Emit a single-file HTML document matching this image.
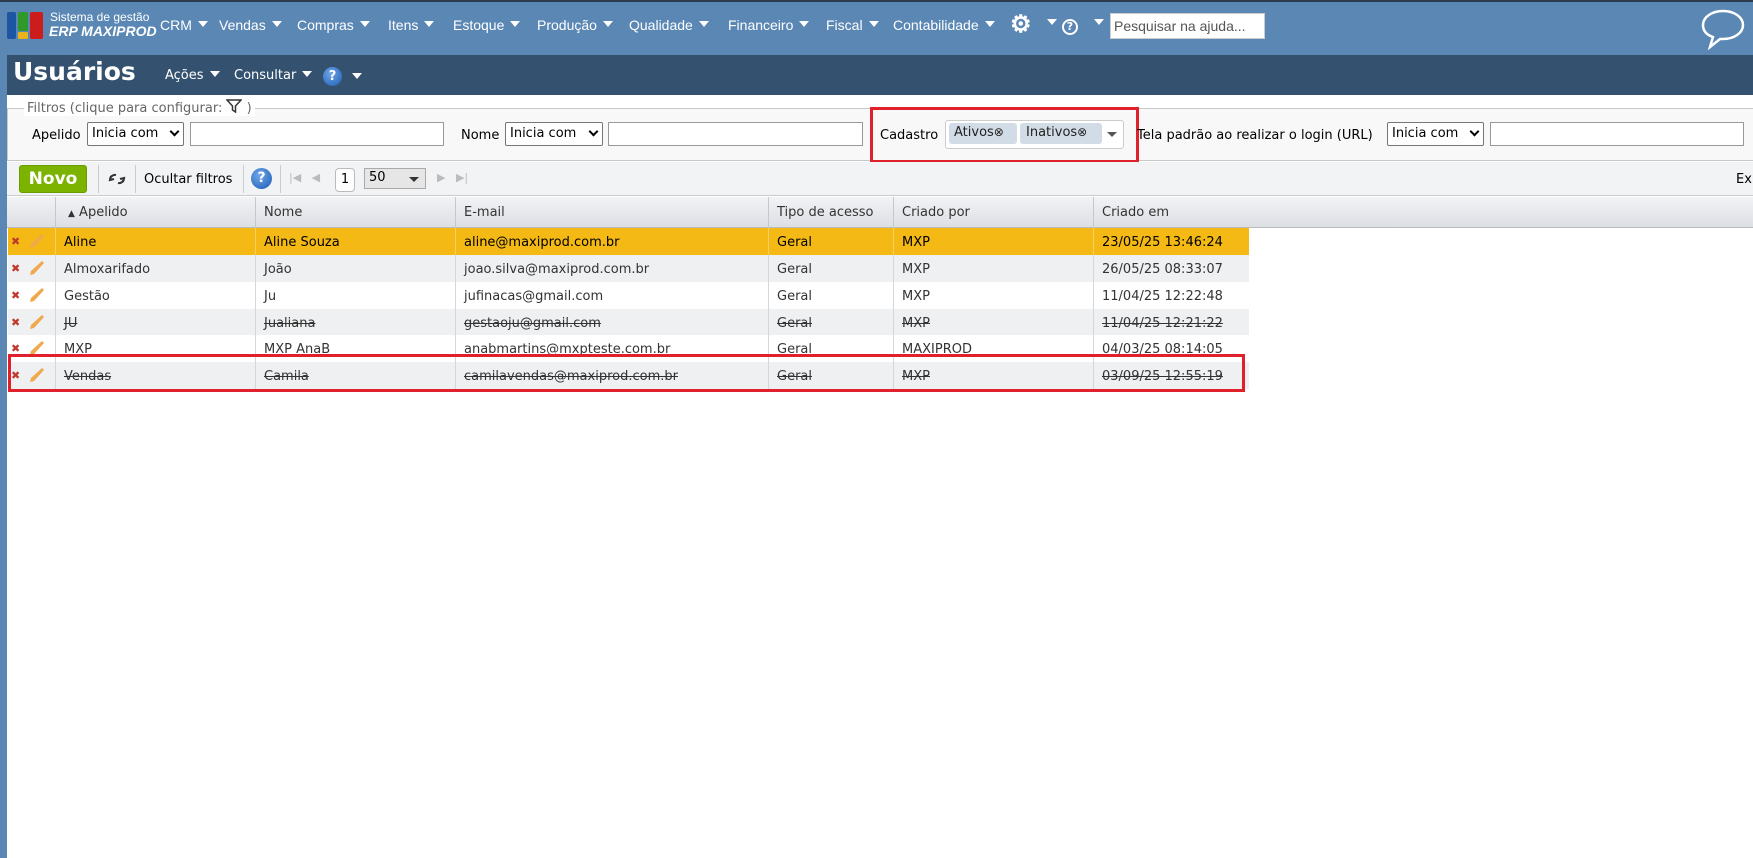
<!DOCTYPE html>
<html><head><meta charset="utf-8">
<style>
*{box-sizing:border-box;margin:0;padding:0}
body{width:1753px;height:858px;overflow:hidden;background:#5a87b4;font-family:"DejaVu Sans",Verdana,sans-serif;font-size:13px;color:#333;position:relative}
.abs{position:absolute}
.nav{font-family:"Liberation Sans",Arial,sans-serif;font-size:14px;color:#fff;top:17px;white-space:nowrap}
.tri{display:inline-block;width:0;height:0;border-left:5px solid transparent;border-right:5px solid transparent;border-top:6px solid #fff;vertical-align:middle;margin-left:6px;position:relative;top:-2px}
.main{left:7px;top:55px;width:1746px;height:803px;background:#fff}
.sel{border:1px solid #767676;border-radius:2px;background:#fff;height:24px;font-size:13px;padding:3px 0 0 4px;color:#000}
.inp{border:1px solid #999;background:#fff;height:24px}
.chev{position:absolute;right:5px;top:5px;width:7px;height:7px;border-right:2px solid #000;border-bottom:2px solid #000;transform:rotate(45deg)}
.row{position:absolute;left:8px;width:1241px;height:27px}
.cell{position:absolute;top:7px;white-space:nowrap}
.s{text-decoration:line-through}
.vl{position:absolute;top:0;width:1px;height:100%;background:#d3d6da}
.x{position:absolute;left:3px;top:7px;color:#c0392b;font-weight:bold;font-size:11px}
.pen{position:absolute;left:20px;top:4px}
</style></head><body>
<div class="abs" style="left:0;top:0;width:1753px;height:2px;background:#2d3b4c"></div>
<div class="abs" style="left:7px;top:12px;width:9px;height:27px;background:#1c56a2;border-radius:2px"></div>
<div class="abs" style="left:18px;top:12px;width:10px;height:19px;background:#2f9a2a;border-radius:2px"></div>
<div class="abs" style="left:18px;top:32px;width:10px;height:7px;background:#eab21c;border-radius:1px"></div>
<div class="abs" style="left:30px;top:12px;width:13px;height:27px;background:#cc1c1c;border-radius:2px"></div>
<div class="abs" style="left:50px;top:10px;color:#fff;font-family:'Liberation Sans',sans-serif;font-size:12px">Sistema de gestão</div>
<div class="abs" style="left:49px;top:23px;color:#fff;font-family:'Liberation Sans',sans-serif;font-size:14px;font-weight:bold;font-style:italic">ERP MAXIPROD</div>
<div class="abs nav" style="left:160px">CRM<span class="tri"></span></div>
<div class="abs nav" style="left:219px">Vendas<span class="tri"></span></div>
<div class="abs nav" style="left:297px">Compras<span class="tri"></span></div>
<div class="abs nav" style="left:388px">Itens<span class="tri"></span></div>
<div class="abs nav" style="left:453px">Estoque<span class="tri"></span></div>
<div class="abs nav" style="left:537px">Produção<span class="tri"></span></div>
<div class="abs nav" style="left:629px">Qualidade<span class="tri"></span></div>
<div class="abs nav" style="left:728px">Financeiro<span class="tri"></span></div>
<div class="abs nav" style="left:826px">Fiscal<span class="tri"></span></div>
<div class="abs nav" style="left:893px">Contabilidade<span class="tri"></span></div>
<div class="abs nav" style="left:1010px;top:10px;font-size:24px;font-weight:bold">⚙</div>
<div class="abs nav" style="left:1041px;top:15px"><span class="tri"></span></div>
<div class="abs" style="left:1062px;top:19px;width:16px;height:16px;border:2px solid #fff;border-radius:50%;color:#fff;font-size:11px;font-weight:bold;text-align:center;line-height:12px">?</div>
<div class="abs nav" style="left:1088px;top:15px"><span class="tri"></span></div>
<div class="abs" style="left:1110px;top:13px;width:155px;height:26px;background:#fff;border:1px solid #ccc;font-family:'Liberation Sans',sans-serif;font-size:14px;color:#555;padding:4px 3px">Pesquisar na ajuda...</div>
<svg class="abs" style="left:1700px;top:8px" width="46" height="42" viewBox="0 0 46 42"><path d="M23 3C12 3 3 9 3 17c0 6 4 10 10 12l-3 10 10-8c1 0 2 0 3 0 11 0 20-6 20-14S34 3 23 3z" fill="none" stroke="#fff" stroke-width="2.5"/></svg>

<div class="abs main">
 <div class="abs" style="left:0;top:0;width:1746px;height:40px;background:#34526f"></div>
 <div class="abs" style="left:6px;top:2px;color:#fff;font-size:25px;font-weight:bold">Usuários</div>
 <div class="abs" style="left:158px;top:13px;color:#fff;font-size:13px">Ações<span class="tri"></span></div>
 <div class="abs" style="left:227px;top:13px;color:#fff;font-size:13px">Consultar<span class="tri"></span></div>
 <div class="abs" style="left:316px;top:12px;width:19px;height:19px;border-radius:50%;background:radial-gradient(circle at 40% 35%,#6fa6e8,#1d5cb5);color:#fff;font-weight:bold;font-size:13px;text-align:center;line-height:19px">?</div>
 <div class="abs" style="left:345px;top:15px"><span class="tri" style="margin:0"></span></div>
 <div class="abs" style="left:0;top:53px;width:1746px;height:53px;border-top:1px solid #c8c8c8;border-left:1px solid #c8c8c8;border-bottom:1px solid #c8c8c8;background:#f8f8f8"></div>
 <div class="abs" style="left:17px;top:44px;background:#fff;padding:0 3px;color:#666;font-size:13px">Filtros (clique para configurar: <svg width="16" height="14" viewBox="0 0 16 14" style="vertical-align:-1px"><path d="M1 1h14L9.5 7v6L6.5 11V7z" fill="none" stroke="#333" stroke-width="1.5"/></svg> )</div>
 <div class="abs" style="left:25px;top:73px;color:#000">Apelido</div>
 <div class="abs sel" style="left:80px;top:67px;width:97px">Inicia com<span class="chev"></span></div>
 <div class="abs inp" style="left:183px;top:67px;width:254px"></div>
 <div class="abs" style="left:454px;top:73px;color:#000">Nome</div>
 <div class="abs sel" style="left:498px;top:67px;width:98px">Inicia com<span class="chev"></span></div>
 <div class="abs inp" style="left:601px;top:67px;width:255px"></div>
 <div class="abs" style="left:863px;top:52px;width:269px;height:56px;border:3px solid #e0202a"></div>
 <div class="abs" style="left:873px;top:73px;color:#000">Cadastro</div>
 <div class="abs" style="left:938px;top:65px;width:179px;height:29px;border:1px solid #ccc;border-radius:3px;background:#fff"></div>
 <div class="abs" style="left:942px;top:68px;width:68px;height:21px;background:#d2dce6;border-radius:3px;padding:2px 5px;font-size:13px;color:#222">Ativos<span style="font-size:12px">⊗</span></div>
 <div class="abs" style="left:1013px;top:68px;width:82px;height:21px;background:#d2dce6;border-radius:3px;padding:2px 6px;font-size:13px;color:#222">Inativos<span style="font-size:12px">⊗</span></div>
 <div class="abs" style="left:1100px;top:77px;border-left:5px solid transparent;border-right:5px solid transparent;border-top:5px solid #555"></div>
 <div class="abs" style="left:1130px;top:73px;color:#000">Tela padrão ao realizar o login (URL)</div>
 <div class="abs sel" style="left:1380px;top:67px;width:97px">Inicia com<span class="chev"></span></div>
 <div class="abs inp" style="left:1483px;top:67px;width:254px"></div>
 <div class="abs" style="left:0;top:107px;width:1746px;height:34px;background:#f2f3f5;border-bottom:1px solid #ccc"></div>
 <div class="abs" style="left:12px;top:110px;width:68px;height:28px;background:#7bb300;border:1px solid #6a9c00;border-radius:3px;color:#fff;font-weight:bold;font-size:17px;text-align:center;line-height:26px">Novo</div>
 <div class="abs" style="left:91px;top:110px;width:1px;height:28px;background:#ccc"></div>
 <svg class="abs" style="left:101px;top:117px" width="18" height="14" viewBox="0 0 18 14"><path d="M8 3A5 5 0 0 0 2 8M3 4l-1 4 4-1M10 11a5 5 0 0 0 6-5M15 10l1-4-4 1" fill="none" stroke="#333" stroke-width="2"/></svg>
 <div class="abs" style="left:128px;top:110px;width:1px;height:28px;background:#ccc"></div>
 <div class="abs" style="left:137px;top:117px;color:#000">Ocultar filtros</div>
 <div class="abs" style="left:236px;top:110px;width:1px;height:28px;background:#ccc"></div>
 <div class="abs" style="left:244px;top:113px;width:21px;height:21px;border-radius:50%;background:radial-gradient(circle at 40% 35%,#6fa6e8,#1d5cb5);color:#fff;font-weight:bold;font-size:14px;text-align:center;line-height:21px">?</div>
 <div class="abs" style="left:273px;top:110px;width:1px;height:28px;background:#ccc"></div>
 <div class="abs" style="left:282px;top:116px;color:#bbb;font-size:11px">|◀ &nbsp; ◀</div>
 <div class="abs" style="left:328px;top:113px;width:20px;height:24px;border:1px solid #bbb;border-radius:4px;background:#fff;text-align:center;line-height:22px;color:#000">1</div>
 <div class="abs" style="left:357px;top:113px;width:62px;height:21px;border:1px solid #aaa;background:#e6e6e6;padding:1px 4px;color:#000">50</div>
 <div class="abs" style="left:402px;top:122px;border-left:5px solid transparent;border-right:5px solid transparent;border-top:5px solid #333"></div>
 <div class="abs" style="left:430px;top:116px;color:#bbb;font-size:11px">▶ &nbsp; ▶|</div>
 <div class="abs" style="left:1729px;top:117px;color:#000">Ex</div>
 <div class="abs" style="left:0;top:142px;width:1746px;height:31px;background:linear-gradient(#f2f3f5,#dcdfe4);border-bottom:1px solid #bbb"></div>
 <div class="abs" style="left:48px;top:142px;width:1px;height:31px;background:#c4c8ce"></div>
 <div class="abs" style="left:248px;top:142px;width:1px;height:31px;background:#c4c8ce"></div>
 <div class="abs" style="left:448px;top:142px;width:1px;height:31px;background:#c4c8ce"></div>
 <div class="abs" style="left:761px;top:142px;width:1px;height:31px;background:#c4c8ce"></div>
 <div class="abs" style="left:886px;top:142px;width:1px;height:31px;background:#c4c8ce"></div>
 <div class="abs" style="left:1086px;top:142px;width:1px;height:31px;background:#c4c8ce"></div>
 <div class="abs" style="left:61px;top:150px;color:#333"><span style="font-size:9px">▲</span> Apelido</div>
 <div class="abs" style="left:257px;top:150px">Nome</div>
 <div class="abs" style="left:457px;top:150px">E-mail</div>
 <div class="abs" style="left:770px;top:150px">Tipo de acesso</div>
 <div class="abs" style="left:895px;top:150px">Criado por</div>
 <div class="abs" style="left:1095px;top:150px">Criado em</div>
</div>

<div class="row" style="top:228px;background:#f4b915;color:#000">
 <div class="vl" style="left:47px;background:#fff5"></div><div class="vl" style="left:247px;background:#fff5"></div><div class="vl" style="left:447px;background:#fff5"></div><div class="vl" style="left:760px;background:#fff5"></div><div class="vl" style="left:885px;background:#fff5"></div><div class="vl" style="left:1085px;background:#fff5"></div>
 <div class="x">✖</div><svg class="pen" width="18" height="18" viewBox="0 0 18 18"><path d="M14 2l2 2L6 15l-4 1 1-4z" fill="#f0a84c"/></svg>
 <div class="cell" style="left:56px">Aline</div><div class="cell" style="left:256px">Aline Souza</div><div class="cell" style="left:456px">aline@maxiprod.com.br</div><div class="cell" style="left:769px">Geral</div><div class="cell" style="left:894px">MXP</div><div class="cell" style="left:1094px">23/05/25 13:46:24</div>
</div>
<div class="row" style="top:255px;background:#eff0f2">
 <div class="vl" style="left:47px"></div><div class="vl" style="left:247px"></div><div class="vl" style="left:447px"></div><div class="vl" style="left:760px"></div><div class="vl" style="left:885px"></div><div class="vl" style="left:1085px"></div>
 <div class="x">✖</div><svg class="pen" width="18" height="18" viewBox="0 0 18 18"><path d="M14 2l2 2L6 15l-4 1 1-4z" fill="#f0a84c"/></svg>
 <div class="cell" style="left:56px">Almoxarifado</div><div class="cell" style="left:256px">João</div><div class="cell" style="left:456px">joao.silva@maxiprod.com.br</div><div class="cell" style="left:769px">Geral</div><div class="cell" style="left:894px">MXP</div><div class="cell" style="left:1094px">26/05/25 08:33:07</div>
</div>
<div class="row" style="top:282px;background:#fff">
 <div class="vl" style="left:47px"></div><div class="vl" style="left:247px"></div><div class="vl" style="left:447px"></div><div class="vl" style="left:760px"></div><div class="vl" style="left:885px"></div><div class="vl" style="left:1085px"></div>
 <div class="x">✖</div><svg class="pen" width="18" height="18" viewBox="0 0 18 18"><path d="M14 2l2 2L6 15l-4 1 1-4z" fill="#f0a84c"/></svg>
 <div class="cell" style="left:56px">Gestão</div><div class="cell" style="left:256px">Ju</div><div class="cell" style="left:456px">jufinacas@gmail.com</div><div class="cell" style="left:769px">Geral</div><div class="cell" style="left:894px">MXP</div><div class="cell" style="left:1094px">11/04/25 12:22:48</div>
</div>
<div class="row" style="top:309px;background:#eff0f2">
 <div class="vl" style="left:47px"></div><div class="vl" style="left:247px"></div><div class="vl" style="left:447px"></div><div class="vl" style="left:760px"></div><div class="vl" style="left:885px"></div><div class="vl" style="left:1085px"></div>
 <div class="x">✖</div><svg class="pen" width="18" height="18" viewBox="0 0 18 18"><path d="M14 2l2 2L6 15l-4 1 1-4z" fill="#f0a84c"/></svg>
 <div class="cell s" style="left:56px">JU</div><div class="cell s" style="left:256px">Jualiana</div><div class="cell s" style="left:456px">gestaoju@gmail.com</div><div class="cell s" style="left:769px">Geral</div><div class="cell s" style="left:894px">MXP</div><div class="cell s" style="left:1094px">11/04/25 12:21:22</div>
</div>
<div class="row" style="top:335px;background:#fff">
 <div class="vl" style="left:47px"></div><div class="vl" style="left:247px"></div><div class="vl" style="left:447px"></div><div class="vl" style="left:760px"></div><div class="vl" style="left:885px"></div><div class="vl" style="left:1085px"></div>
 <div class="x">✖</div><svg class="pen" width="18" height="18" viewBox="0 0 18 18"><path d="M14 2l2 2L6 15l-4 1 1-4z" fill="#f0a84c"/></svg>
 <div class="cell" style="left:56px">MXP</div><div class="cell" style="left:256px">MXP AnaB</div><div class="cell" style="left:456px">anabmartins@mxpteste.com.br</div><div class="cell" style="left:769px">Geral</div><div class="cell" style="left:894px">MAXIPROD</div><div class="cell" style="left:1094px">04/03/25 08:14:05</div>
</div>
<div class="row" style="top:362px;background:#eff0f2">
 <div class="vl" style="left:47px"></div><div class="vl" style="left:247px"></div><div class="vl" style="left:447px"></div><div class="vl" style="left:760px"></div><div class="vl" style="left:885px"></div><div class="vl" style="left:1085px"></div>
 <div class="x">✖</div><svg class="pen" width="18" height="18" viewBox="0 0 18 18"><path d="M14 2l2 2L6 15l-4 1 1-4z" fill="#f0a84c"/></svg>
 <div class="cell s" style="left:56px">Vendas</div><div class="cell s" style="left:256px">Camila</div><div class="cell s" style="left:456px">camilavendas@maxiprod.com.br</div><div class="cell s" style="left:769px">Geral</div><div class="cell s" style="left:894px">MXP</div><div class="cell s" style="left:1094px">03/09/25 12:55:19</div>
</div>
<div class="abs" style="left:8px;top:354px;width:1237px;height:38px;border:3px solid #e0202a"></div>
</body></html>
